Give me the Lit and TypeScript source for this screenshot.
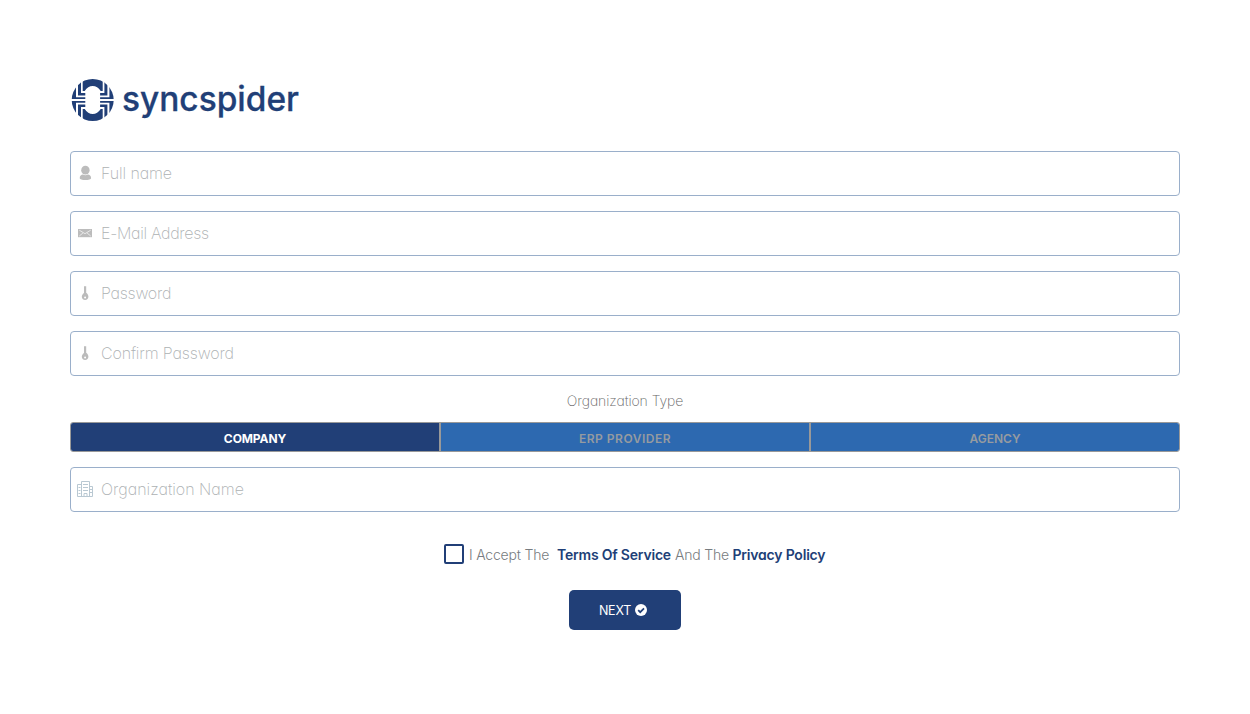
import { LitElement, html, svg, css } from "lit";
import { customElement, property, state } from "lit/decorators.js";
import { classMap } from "lit/directives/class-map.js";

const icons: Record<string, unknown> = {
  user: svg`<g fill="#bcbcbc"><ellipse cx="8.400" cy="5.200" rx="4.200" ry="4.400"/><path d="M2.700 13.200c0-2.300 1.600-3.400 3.200-3.600 1.500.9 3.500.9 5 0 1.600.2 3.200 1.300 3.200 3.600 0 1.100-2.500 1.800-5.700 1.800s-5.700-.7-5.700-1.800z"/></g>`,
  mail: svg`<rect x="1" y="4" width="14" height="8.200" fill="#bcbcbc"/><path d="M2.300 5.200 8 8.700l5.700-3.500M2.300 11l3.600-3M13.700 11l-3.600-3" fill="none" stroke="#f4f4f4" stroke-width=".8"/>`,
  key: svg`<path fill="#bcbcbc" fill-rule="evenodd" d="M7 1.200h2.200v6.600c1.300.9 2.200 2.200 2.200 4 0 2-1.300 3.200-3.300 3.200s-3.300-1.200-3.300-3.200c0-1.600.9-2.800 2.200-3.800zM8.100 11.500a1 1 0 1 0 0 2 1 1 0 0 0 0-2z"/>`,
  building: svg`<g fill="none" stroke="#b9c8d2" stroke-width="1"><path d="M4.500 15.500V.5h8v15M4.500 3.500h-4v12h15v-10h-3"/><path d="M6 3.500h5M6 6.500h5M6 9.500h5M1.500 6.500h2M1.500 9.500h2M1.500 12.500h2M13 8.500h2M13 11.500h2M7 15.500v-3h3v3"/></g>`,
};

@customElement("form-field")
class FormField extends LitElement {
  @property() icon = "user";
  @property() label = "";
  @property() type = "text";
  @property({ type: Number }) spacing = 0;

  static styles = css`
    :host { display: block; }
    .field {
      box-sizing: border-box; height: 45px; display: flex; align-items: center;
      border: 1px solid #9aafca; border-radius: 4px; padding-left: 6px; background: #fff;
    }
    svg { width: 16px; height: 16px; flex: none; margin-bottom: 1px; }
    input {
      flex: 1; min-width: 0; border: 0; outline: 0; padding: 0 0 2px; margin-left: 8px; height: 40px;
      box-sizing: border-box; background: none; font: 200 16px Inter, "Open Sans", sans-serif;
      font-feature-settings: "cv11"; letter-spacing: inherit;
    }
    input::placeholder { color: #adb1b3; opacity: 1; }
  `;

  render() {
    return html`<label class="field" style="letter-spacing:${this.spacing}px">
      <svg viewBox="0 0 16 16">${icons[this.icon]}</svg>
      <input type=${this.type} placeholder=${this.label} />
    </label>`;
  }
}

@customElement("app-root")
class AppRoot extends LitElement {
  @state() private kind = "COMPANY";
  @state() private accepted = false;

  static styles = css`
    :host {
      display: block; box-sizing: border-box; height: 714px; padding: 79px 70px 0; background: #fff;
      font-family: Inter, "Open Sans", sans-serif; font-feature-settings: "cv11"; color: #777c80;
    }
    .logo { display: block; width: 230px; height: 42px; margin-bottom: 30px; overflow: visible; }
    .word { font: 500 34px Inter, sans-serif; fill: #213f77; stroke: #213f77; stroke-width: 0.3px; }
    .fields { display: grid; gap: 15px; }
    .caption { text-align: center; font-size: 14px; font-weight: 200; line-height: 20px; margin: 15px 0 11px; color: #666; letter-spacing: -0.07px; }
    .tabs {
      box-sizing: border-box; height: 30px; display: grid; grid-template-columns: 370px 370px 1fr;
      border: 1px solid #999; border-radius: 3px; overflow: hidden; margin-bottom: 15px;
    }
    .tab {
      border: 0; border-right: 2px solid #999; padding: 2px 0 0; background: #2d69b0; color: #969ba0;
      font: 600 12px Inter, sans-serif;
    }
    .tab:last-child { border-right: 0; }
    .active { background: #213f77; color: #fff; font-weight: 700; }
    .terms { display: flex; align-items: center; height: 20px; margin: 32px 0 26px 374px; font-size: 14px; font-weight: 300; letter-spacing: -0.2px; }
    .box { box-sizing: border-box; width: 20px; height: 20px; border: 2px solid #213f77; border-radius: 2px; margin-right: 5px; background: #fff; padding: 0; }
    .box.on { background: #213f77; }
    .terms span, .terms b { white-space: nowrap; flex: none; }
    .terms b { font-weight: 600; color: #213f77; }
    .accept { width: 88px; }
    .tos { width: 118px; }
    .and { width: 57.500px; }
    .next {
      display: flex; align-items: center; justify-content: center; gap: 4px; width: 112px; height: 40px; padding: 0 4px 0 0;
      margin: 0 auto; border: 0; border-radius: 5px; background: #213f77; color: #fff; font: 400 12.500px Inter, sans-serif; letter-spacing: -0.2px;
    }
    .next svg { width: 12px; height: 12px; }
  `;

  private tab(name: string, spacing: number) {
    return html`<button class=${classMap({ tab: true, active: this.kind === name })}
      style="letter-spacing:${spacing}px" @click=${() => (this.kind = name)}>${name}</button>`;
  }

  render() {
    return html`
      <svg class="logo" viewBox="0 0 230 42">
        <clipPath id="disc"><circle cx="22.700" cy="21" r="21"/></clipPath>
        <g clip-path="url(#disc)" fill="#213f77">
          <path d="M12.700 0h20v12h-2q-3.200-5-8-5t-8 5h-2zM12.700 42h20V30h-2q-3.200 5-8 5t-8-5h-2z"/>
          <g id="side">
            <g id="quarter">
              <path d="M0 5h6v13.200h9.300v1.900H0z"/>
              <path d="M8 2h3v12h4.300v2.500H8z"/>
            </g>
            <use href="#quarter" transform="matrix(1 0 0 -1 0 42)"/>
          </g>
          <use href="#side" transform="matrix(-1 0 0 1 45.400 0)"/>
        </g>
        <text class="word" x="52" y="31.500" textLength="177" lengthAdjust="spacingAndGlyphs">syncspider</text>
      </svg>
      <div class="fields">
        <form-field icon="user" label="Full name" spacing="-0.1"></form-field>
        <form-field icon="mail" label="E-Mail Address" spacing="-0.3"></form-field>
        <form-field icon="key" type="password" label="Password" spacing="-0.25"></form-field>
        <form-field icon="key" type="password" label="Confirm Password" spacing="-0.15"></form-field>
      </div>
      <div class="caption">Organization Type</div>
      <div class="tabs">${this.tab("COMPANY", -0.1)}${this.tab("ERP PROVIDER", 0.5)}${this.tab("AGENCY", 0)}</div>
      <form-field icon="building" label="Organization Name"></form-field>
      <div class="terms">
        <button class=${classMap({ box: true, on: this.accepted })} aria-label="Accept"
          @click=${() => (this.accepted = !this.accepted)}></button>
        <span class="accept">I Accept The</span><b class="tos">Terms Of Service</b>
        <span class="and">And The</span><b class="privacy">Privacy Policy</b>
      </div>
      <button class="next">NEXT
        <svg viewBox="0 0 12 12"><circle cx="6" cy="6" r="6" fill="#fff"/><path d="M3.200 6.200l2 2L9 4.400" fill="none" stroke="#213f77" stroke-width="1.700"/></svg>
      </button>`;
  }
}
